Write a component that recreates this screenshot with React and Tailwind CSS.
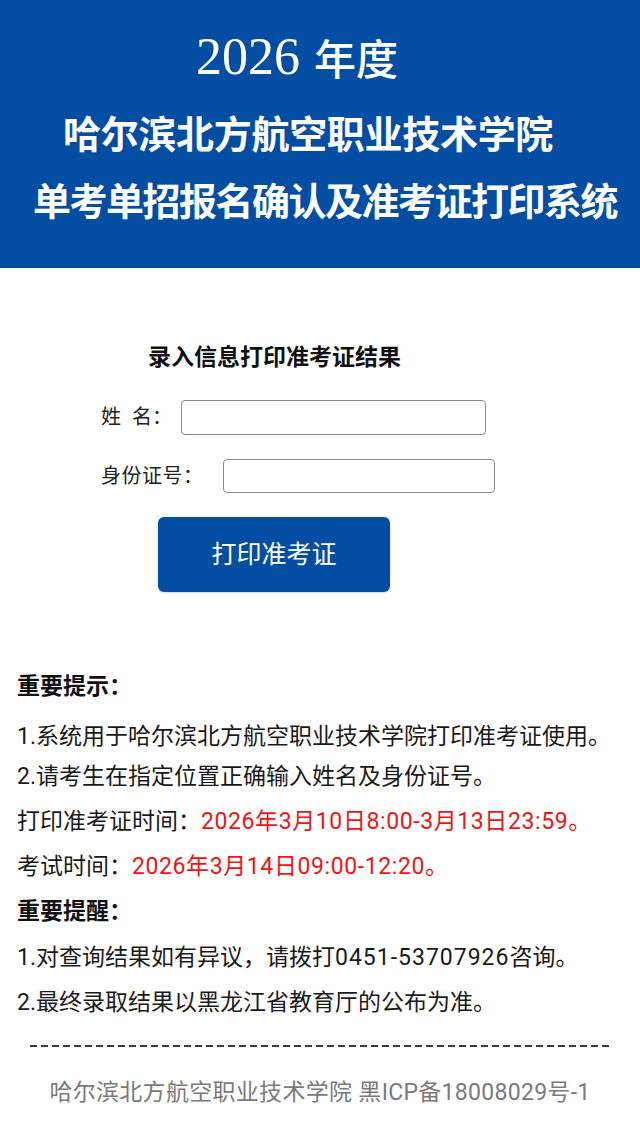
export default function App() {
  const font = "font-['Roboto','Noto_Sans_CJK_SC',sans-serif]";
  return (
    <div className={`w-[640px] min-h-[1129px] bg-white text-[#1a1a1a] ${font}`}>
      {/* Banner */}
      <div className="h-[268px] bg-[#034ea2] text-white flex flex-col items-center">
        <div className="mt-[26px] h-[62px] flex items-center pr-[46px] leading-none">
          <span className="font-['Liberation_Serif',serif] text-[52px]">2026</span>
          <span className="ml-[14px] text-[42px] font-medium font-['Noto_Sans_CJK_SC',sans-serif]">年度</span>
        </div>
        <div className="mt-[24px] h-[40px] flex items-center pr-[24px] text-[38px] font-bold leading-none tracking-[-0.3px] font-['Noto_Sans_CJK_SC',sans-serif]">
          哈尔滨北方航空职业技术学院
        </div>
        <div className="mt-[27px] h-[40px] flex items-center pl-[10px] text-[38px] font-bold leading-none tracking-[-1.5px] font-['Noto_Sans_CJK_SC',sans-serif]">
          单考单招报名确认及准考证打印系统
        </div>
      </div>

      {/* Form */}
      <div className="pt-[73px]">
        <div className="ml-[148px] text-[23px] font-bold leading-[34px] text-[#111]">
          录入信息打印准考证结果
        </div>
        <div className="mt-[25px] ml-[101px] flex items-center text-[20px] leading-[35px] text-[#222]">
          <span>姓</span>
          <span className="ml-[11px]">名：</span>
          <input
            type="text"
            className="ml-[9px] w-[305px] h-[35px] border border-[#8a8a8a] rounded-[4px] bg-white outline-none"
          />
        </div>
        <div className="mt-[24px] ml-[101px] flex items-center text-[20px] leading-[34px] text-[#222]">
          <span className="tracking-[0.5px]">身份证号：</span>
          <input
            type="text"
            className="ml-[19px] w-[272px] h-[34px] border border-[#8a8a8a] rounded-[4px] bg-white outline-none"
          />
        </div>
        <button
          type="button"
          className="mt-[24px] ml-[158px] w-[232px] h-[75px] rounded-[6px] bg-[#034ea2] text-white text-[25px] shadow-[0_1px_2px_rgba(0,0,0,0.15)] flex items-center justify-center"
        >
          打印准考证
        </button>
      </div>

      {/* Notes */}
      <div className="mt-[80px] px-[17px] text-[23px] leading-[30px]">
        <p className="font-bold text-[#111]">重要提示：</p>
        <p className="mt-[20px]">1.系统用于哈尔滨北方航空职业技术学院打印准考证使用。</p>
        <p className="mt-[10px]">2.请考生在指定位置正确输入姓名及身份证号。</p>
        <p className="mt-[15px]">
          打印准考证时间：<span className="text-[#f01414] tracking-[0.6px]">2026年3月10日8:00-3月13日23:59。</span>
        </p>
        <p className="mt-[15px]">
          考试时间：<span className="text-[#f01414] tracking-[0.6px]">2026年3月14日09:00-12:20。</span>
        </p>
        <p className="mt-[15px] font-bold text-[#111]">重要提醒：</p>
        <p className="mt-[16px]">
          1.对查询结果如有异议，请拨打<span className="tracking-[1px]">0451-53707926</span>咨询。
        </p>
        <p className="mt-[15px]">2.最终录取结果以黑龙江省教育厅的公布为准。</p>
      </div>

      <div className="mt-[27px] ml-[30px] w-[582px] h-[2px] bg-[repeating-linear-gradient(to_right,#3a3a3a_0px,#3a3a3a_7px,transparent_7px,transparent_11px)]" />

      <div className="mt-[31px] pb-[20px] text-center text-[23px] leading-[30px] text-[#7a7a7a] tracking-[0.3px]">
        哈尔滨北方航空职业技术学院 黑ICP备18008029号-1
      </div>
    </div>
  );
}
